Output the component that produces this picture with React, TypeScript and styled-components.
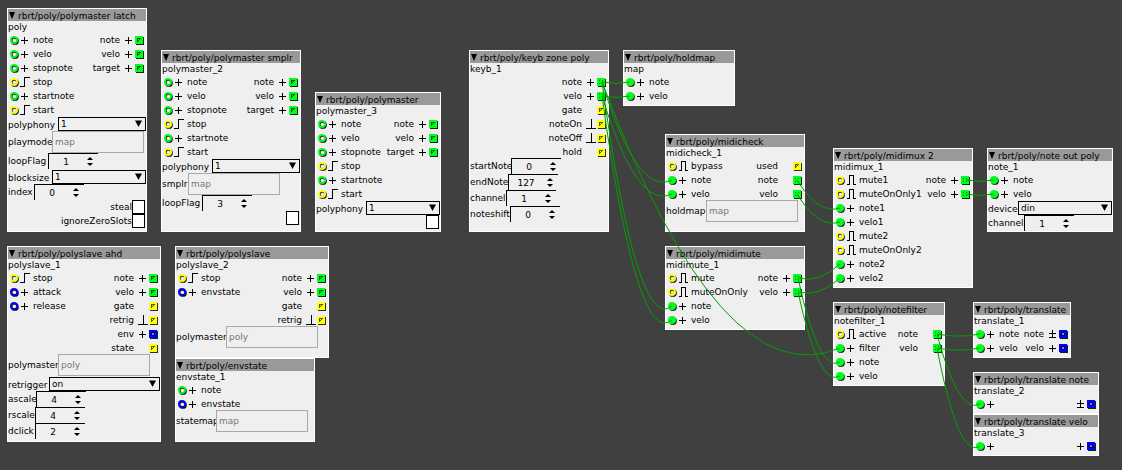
import React, { useId } from "react";
import styled, { createGlobalStyle } from "styled-components";

type Signal = "bool" | "frac" | "int";
type Glyph = "plus" | "rise" | "pulse" | "trig" | "plusminus" | "none";
type Port = { label: string; signal: Signal; glyph: Glyph; linked?: boolean };
type Param =
  | { kind: "choice"; label: string; width: number; value: string }
  | { kind: "text"; label: string; width: number; value: string }
  | { kind: "number"; label: string; width: number; value: number }
  | { kind: "check"; label: string; hidden?: boolean };
type Patch = {
  x: number;
  y: number;
  w: number;
  h: number;
  type: string;
  name: string;
  inlets: Port[];
  outlets: Port[];
  params?: Param[];
};

const INK = "#000000";
const FILL: Record<Signal, string> = { int: "#00ff20", bool: "#ffff10", frac: "#0000ff" };

const GlobalStyle = createGlobalStyle`
  *, *::before, *::after { box-sizing: border-box; }
  body { margin: 0; background: #404040; }
  button, input, select { font: inherit; color: inherit; margin: 0; padding: 0; border-radius: 0; }
`;

const Canvas = styled.main`
  position: relative;
  min-height: 100vh;
  overflow: hidden;
  background: #404040;
  color: ${INK};
  font: 9px/12px "DejaVu Sans", "Noto Sans", sans-serif;
`;

const Cables = styled.svg`
  position: absolute;
  inset: 0;
  width: 100%;
  height: 100%;
  pointer-events: none;
  fill: none;
  stroke: #00a000;
  stroke-width: 1;
`;

const Box = styled.section<{ $x: number; $y: number; $w: number; $h: number }>`
  position: absolute;
  left: ${(p) => p.$x}px;
  top: ${(p) => p.$y}px;
  width: ${(p) => p.$w}px;
  min-height: ${(p) => p.$h}px;
  border: 1px solid #ffffff;
  background: #efefef;
  white-space: nowrap;
`;

const TitleBar = styled.header`
  display: flex;
  align-items: center;
  gap: 3px;
  height: 12px;
  padding-left: 1px;
  background: #999999;
  overflow: hidden;
`;

const MenuButton = styled.button`
  display: flex;
  flex: none;
  border: 0;
  background: none;
`;

const Title = styled.h2`
  margin: 0;
  padding-top: 2px;
  font: inherit;
`;

const Name = styled.div`
  height: 12px;
`;

const Ports = styled.div`
  display: flex;
  justify-content: space-between;
`;

const PortList = styled.ul`
  margin: 0;
  padding: 0;
  list-style: none;
`;

const Inlet = styled.li`
  display: flex;
  align-items: center;
  height: 14px;
  padding-left: 2px;
`;

const Outlet = styled(Inlet)`
  justify-content: flex-end;
  padding: 0 2px 0 0;
`;

const InletLabel = styled.span`
  padding-left: 2px;
`;

const OutletLabel = styled.span`
  padding-right: 4px;
`;

const JackArt = styled.svg`
  display: block;
  flex: none;
  width: 9px;
  height: 10px;
`;

const GlyphArt = styled.svg`
  display: block;
  flex: none;
  width: 11px;
  height: 12px;
  fill: none;
  stroke: ${INK};
  ${Inlet} > & { margin-left: 1px; }
  ${Outlet} > & { margin-left: 0; }
`;

const Params = styled.div`
  display: flex;
  flex-direction: column;
  margin-top: -1px;
`;

const ParamRow = styled.div<{ $h: number; $align?: string }>`
  display: flex;
  align-items: ${(p) => p.$align ?? "center"};
  height: ${(p) => p.$h}px;
`;

const ParamLabel = styled.label<{ $w: number }>`
  flex: none;
  width: ${(p) => p.$w}px;
`;

const SelectFrame = styled.div`
  position: relative;
  flex: 1;
  height: 14px;
`;

const Select = styled.select`
  display: block;
  width: 100%;
  height: 14px;
  padding-left: 2px;
  border: 1px solid ${INK};
  background: #efefef;
  line-height: 12px;
  appearance: none;
`;

const SelectArrow = styled.svg`
  position: absolute;
  right: 4px;
  top: 3px;
  width: 7px;
  height: 7px;
  pointer-events: none;
`;

const TextField = styled.input`
  width: 92px;
  height: 22px;
  padding: 0 2px;
  border: 1px solid #a9a9ad;
  background: #efefef;
  color: #777777;
`;

const Spinner = styled.div`
  display: flex;
  align-items: center;
  width: 50px;
  height: 16px;
  border-top: 1px solid ${INK};
  border-left: 1px solid ${INK};
`;

const NumberField = styled.input`
  width: 34px;
  height: 15px;
  border: 0;
  background: none;
  text-align: center;
  appearance: textfield;
  &::-webkit-inner-spin-button { appearance: none; margin: 0; }
`;

const Steps = styled.div`
  display: flex;
  flex-direction: column;
  gap: 3px;
  padding-left: 4px;
`;

const StepButton = styled.button`
  display: block;
  height: 3px;
  border: 0;
  background: none;
  svg { display: block; }
`;

const CheckRow = styled.div`
  display: flex;
  align-items: center;
  justify-content: flex-end;
  height: 14px;
  padding-right: 1px;
`;

const CheckBox = styled.input`
  width: 13px;
  height: 14px;
  border: 1px solid ${INK};
  background: #ffffff;
  appearance: none;
`;

function InletJack({ port }: { port: Port }) {
  const fill = FILL[port.signal];
  return (
    <JackArt viewBox="0 0 9 10" aria-hidden="true">
      <circle cx="4.9" cy="5.9" r="3.9" fill="#111" />
      <circle cx="4" cy="5" r="4" fill={fill} />
      {!port.linked && (
        <>
          <circle cx="4" cy="5" r="2.2" fill="#333320" />
          <circle cx="4.4" cy="5.4" r="1.7" fill="#f4f4f4" />
        </>
      )}
    </JackArt>
  );
}

function OutletJack({ port }: { port: Port }) {
  const fill = FILL[port.signal];
  return (
    <JackArt viewBox="0 0 9 10" shapeRendering="crispEdges" aria-hidden="true">
      <rect x="1" y="2" width="8" height="8" fill={port.signal === "bool" ? "#333300" : "#003300"} />
      <rect x="0" y="1" width="8" height="8" fill={fill} />
      {port.linked ? (
        <g fill="#007a10">
          <rect x="2" y="3" width="1" height="1" />
          <rect x="5" y="3" width="1" height="1" />
          <rect x="2" y="6" width="1" height="1" />
          <rect x="5" y="6" width="1" height="1" />
        </g>
      ) : port.signal === "frac" ? (
        <>
          <rect x="2" y="3" width="4" height="4" fill="#000066" />
          <rect x="3" y="4" width="2" height="2" fill="#8080d8" />
        </>
      ) : (
        <g fill={INK} opacity="0.65">
          <rect x="2" y="3" width="1" height="4" />
          <rect x="3" y="3" width="3" height="1" />
          <rect x="4" y="4" width="1" height="1" />
          <rect x="3" y="5" width="1" height="1" />
        </g>
      )}
    </JackArt>
  );
}

const GLYPH_PATH: Record<Glyph, string> = {
  plus: "M1 6.5H8M4.5 3V10",
  rise: "M0 10.5H4.5V1.5H10",
  pulse: "M1 10.5H3.5V1.5H7.5V10.5H10",
  trig: "M0 10.5H10M5.5 1V10",
  plusminus: "M1 5.5H8M4.5 2V9M1 9.5H8",
  none: "",
};

function PortGlyph({ glyph }: { glyph: Glyph }) {
  return (
    <GlyphArt viewBox="0 0 11 12" shapeRendering="crispEdges" aria-hidden="true">
      <path d={GLYPH_PATH[glyph]} />
    </GlyphArt>
  );
}

function ParamControl({ param }: { param: Param }) {
  const id = useId();
  switch (param.kind) {
    case "choice":
      return (
        <ParamRow $h={15} $align="flex-end">
          <ParamLabel htmlFor={id} $w={param.width}>{param.label}</ParamLabel>
          <SelectFrame>
            <Select id={id} defaultValue={param.value}>
              <option>{param.value}</option>
            </Select>
            <SelectArrow viewBox="0 0 7 7" aria-hidden="true">
              <path d="M0 0.5H7L3.5 7Z" />
            </SelectArrow>
          </SelectFrame>
        </ParamRow>
      );
    case "text":
      return (
        <ParamRow $h={22}>
          <ParamLabel htmlFor={id} $w={param.width}>{param.label}</ParamLabel>
          <TextField id={id} defaultValue={param.value} />
        </ParamRow>
      );
    case "number":
      return (
        <ParamRow $h={16}>
          <ParamLabel htmlFor={id} $w={param.width}>{param.label}</ParamLabel>
          <Spinner>
            <NumberField id={id} type="number" defaultValue={param.value} />
            <Steps>
              <StepButton aria-label={`Increase ${param.label}`}>
                <svg width="6" height="3" aria-hidden="true"><path d="M0 3L3 0L6 3Z" /></svg>
              </StepButton>
              <StepButton aria-label={`Decrease ${param.label}`}>
                <svg width="6" height="3" aria-hidden="true"><path d="M0 0L3 3L6 0Z" /></svg>
              </StepButton>
            </Steps>
          </Spinner>
        </ParamRow>
      );
    case "check":
      return (
        <CheckRow>
          {!param.hidden && <label htmlFor={id}>{param.label}</label>}
          <CheckBox id={id} type="checkbox" aria-label={param.hidden ? param.label : undefined} />
        </CheckRow>
      );
  }
}

function PatchBox({ patch }: { patch: Patch }) {
  return (
    <Box $x={patch.x} $y={patch.y} $w={patch.w} $h={patch.h}>
      <TitleBar>
        <MenuButton aria-label={`${patch.name} menu`}>
          <svg width="6" height="7" aria-hidden="true"><path d="M0 0H6L3 7Z" /></svg>
        </MenuButton>
        <Title>{patch.type}</Title>
      </TitleBar>
      <Name>{patch.name}</Name>
      <Ports>
        <PortList>
          {patch.inlets.map((port, i) => (
            <Inlet key={i}>
              <InletJack port={port} />
              <PortGlyph glyph={port.glyph} />
              <InletLabel>{port.label}</InletLabel>
            </Inlet>
          ))}
        </PortList>
        <PortList>
          {patch.outlets.map((port, i) => (
            <Outlet key={i}>
              <OutletLabel>{port.label}</OutletLabel>
              <PortGlyph glyph={port.glyph} />
              <OutletJack port={port} />
            </Outlet>
          ))}
        </PortList>
      </Ports>
      {patch.params && (
        <Params>
          {patch.params.map((param) => (
            <ParamControl key={param.label} param={param} />
          ))}
        </Params>
      )}
    </Box>
  );
}

const int = (label: string, linked = false, glyph: Glyph = "plus"): Port => ({ label, signal: "int", glyph, linked });
const bool = (label: string, glyph: Glyph = "none"): Port => ({ label, signal: "bool", glyph });
const frac = (label: string, glyph: Glyph = "plus"): Port => ({ label, signal: "frac", glyph });
const choice = (label: string, width: number, value: string): Param => ({ kind: "choice", label, width, value });
const text = (label: string, width: number, value: string): Param => ({ kind: "text", label, width, value });
const num = (label: string, width: number, value: number): Param => ({ kind: "number", label, width, value });

const masterInlets = [int("note"), int("velo"), int("stopnote"), bool("stop", "rise"), int("startnote"), bool("start", "rise")];
const masterOutlets = [int("note"), int("velo"), int("target")];

const patches: Patch[] = [
  {
    x: 7, y: 8, w: 140, h: 224, type: "rbrt/poly/polymaster latch", name: "poly",
    inlets: masterInlets, outlets: masterOutlets,
    params: [
      choice("polyphony", 50, "1"), text("playmode", 44, "map"), num("loopFlag", 40, 1),
      choice("blocksize", 44, "1"), num("index", 26, 0),
      { kind: "check", label: "steal" }, { kind: "check", label: "ignoreZeroSlots" },
    ],
  },
  {
    x: 161, y: 50, w: 140, h: 182, type: "rbrt/poly/polymaster smplr", name: "polymaster_2",
    inlets: masterInlets, outlets: masterOutlets,
    params: [
      choice("polyphony", 50, "1"), text("smplr", 26, "map"), num("loopFlag", 40, 3),
      { kind: "check", label: "steal", hidden: true },
    ],
  },
  {
    x: 315, y: 92, w: 126, h: 140, type: "rbrt/poly/polymaster", name: "polymaster_3",
    inlets: masterInlets, outlets: masterOutlets,
    params: [choice("polyphony", 50, "1"), { kind: "check", label: "steal", hidden: true }],
  },
  {
    x: 469, y: 50, w: 140, h: 182, type: "rbrt/poly/keyb zone poly", name: "keyb_1",
    inlets: [],
    outlets: [int("note", true), int("velo", true), bool("gate"), bool("noteOn", "trig"), bool("noteOff", "trig"), bool("hold")],
    params: [num("startNote", 41, 0), num("endNote", 38, 127), num("channel", 36, 1), num("noteshift", 40, 0)],
  },
  {
    x: 623, y: 50, w: 112, h: 56, type: "rbrt/poly/holdmap", name: "map",
    inlets: [int("note", true), int("velo", true)], outlets: [],
  },
  {
    x: 665, y: 134, w: 140, h: 98, type: "rbrt/poly/midicheck", name: "midicheck_1",
    inlets: [bool("bypass", "pulse"), int("note", true), int("velo", true)],
    outlets: [bool("used"), int("note", true, "none"), int("velo", true, "none")],
    params: [text("holdmap", 40, "map")],
  },
  {
    x: 665, y: 246, w: 140, h: 84, type: "rbrt/poly/midimute", name: "midimute_1",
    inlets: [bool("mute", "pulse"), bool("muteOnOnly", "pulse"), int("note", true), int("velo", true)],
    outlets: [int("note", true), int("velo", true)],
  },
  {
    x: 833, y: 148, w: 140, h: 140, type: "rbrt/poly/midimux 2", name: "midimux_1",
    inlets: [
      bool("mute1", "pulse"), bool("muteOnOnly1", "pulse"), int("note1", true), int("velo1", true),
      bool("mute2", "pulse"), bool("muteOnOnly2", "pulse"), int("note2", true), int("velo2", true),
    ],
    outlets: [int("note", true), int("velo", true)],
  },
  {
    x: 987, y: 148, w: 126, h: 84, type: "rbrt/poly/note out poly", name: "note_1",
    inlets: [int("note", true), int("velo", true)], outlets: [],
    params: [choice("device", 30, "din"), num("channel", 36, 1)],
  },
  {
    x: 7, y: 246, w: 154, h: 196, type: "rbrt/poly/polyslave ahd", name: "polyslave_1",
    inlets: [bool("stop", "rise"), frac("attack"), frac("release")],
    outlets: [int("note"), int("velo"), bool("gate"), bool("retrig", "trig"), frac("env"), bool("state")],
    params: [
      text("polymaster", 50, "poly"), choice("retrigger", 41, "on"),
      num("ascale", 28, 4), num("rscale", 27, 4), num("dclick", 27, 2),
    ],
  },
  {
    x: 175, y: 246, w: 154, h: 112, type: "rbrt/poly/polyslave", name: "polyslave_2",
    inlets: [bool("stop", "rise"), frac("envstate")],
    outlets: [int("note"), int("velo"), bool("gate"), bool("retrig", "trig")],
    params: [text("polymaster", 50, "poly")],
  },
  {
    x: 175, y: 358, w: 140, h: 84, type: "rbrt/poly/envstate", name: "envstate_1",
    inlets: [int("note"), frac("envstate")], outlets: [],
    params: [text("statemap", 40, "map")],
  },
  {
    x: 833, y: 302, w: 112, h: 84, type: "rbrt/poly/notefilter", name: "notefilter_1",
    inlets: [bool("active", "pulse"), int("filter", true), int("note", true), int("velo", true)],
    outlets: [int("note", true, "none"), int("velo", true, "none")],
  },
  {
    x: 973, y: 302, w: 98, h: 56, type: "rbrt/poly/translate", name: "translate_1",
    inlets: [int("note", true), int("velo", true)],
    outlets: [frac("note", "plusminus"), frac("velo")],
  },
  {
    x: 973, y: 372, w: 126, h: 42, type: "rbrt/poly/translate note", name: "translate_2",
    inlets: [int("", true)], outlets: [frac("", "plusminus")],
  },
  {
    x: 973, y: 414, w: 126, h: 42, type: "rbrt/poly/translate velo", name: "translate_3",
    inlets: [int("", true)], outlets: [frac("")],
  },
];

const links: [number, number, number, number][] = [
  [602, 82, 630, 82],
  [602, 82, 672, 180],
  [602, 82, 672, 306],
  [602, 82, 840, 348],
  [602, 96, 630, 96],
  [602, 96, 672, 194],
  [602, 96, 672, 320],
  [797, 180, 840, 208],
  [797, 194, 840, 222],
  [798, 278, 840, 264],
  [798, 292, 840, 278],
  [798, 278, 840, 362],
  [798, 292, 840, 376],
  [966, 180, 994, 180],
  [966, 194, 994, 194],
  [937, 334, 980, 334],
  [937, 334, 980, 404],
  [937, 348, 980, 348],
  [937, 348, 980, 446],
];

/* A cable hangs between its two jacks; the sag grows with the distance. */
function cablePath([x1, y1, x2, y2]: [number, number, number, number]) {
  const sag = Math.abs(y2 - y1) * 0.1 + Math.abs(x2 - x1) * 0.1;
  return `M${x1} ${y1}Q${(x1 + x2) / 2} ${Math.max(y1, y2) + sag} ${x2} ${y2}`;
}

export default function App() {
  return (
    <>
      <GlobalStyle />
      <Canvas>
        {patches.map((patch) => (
          <PatchBox key={patch.name + patch.x + patch.y} patch={patch} />
        ))}
        <Cables aria-hidden="true">
          {links.map((link, i) => (
            <path key={i} d={cablePath(link)} />
          ))}
        </Cables>
      </Canvas>
    </>
  );
}
